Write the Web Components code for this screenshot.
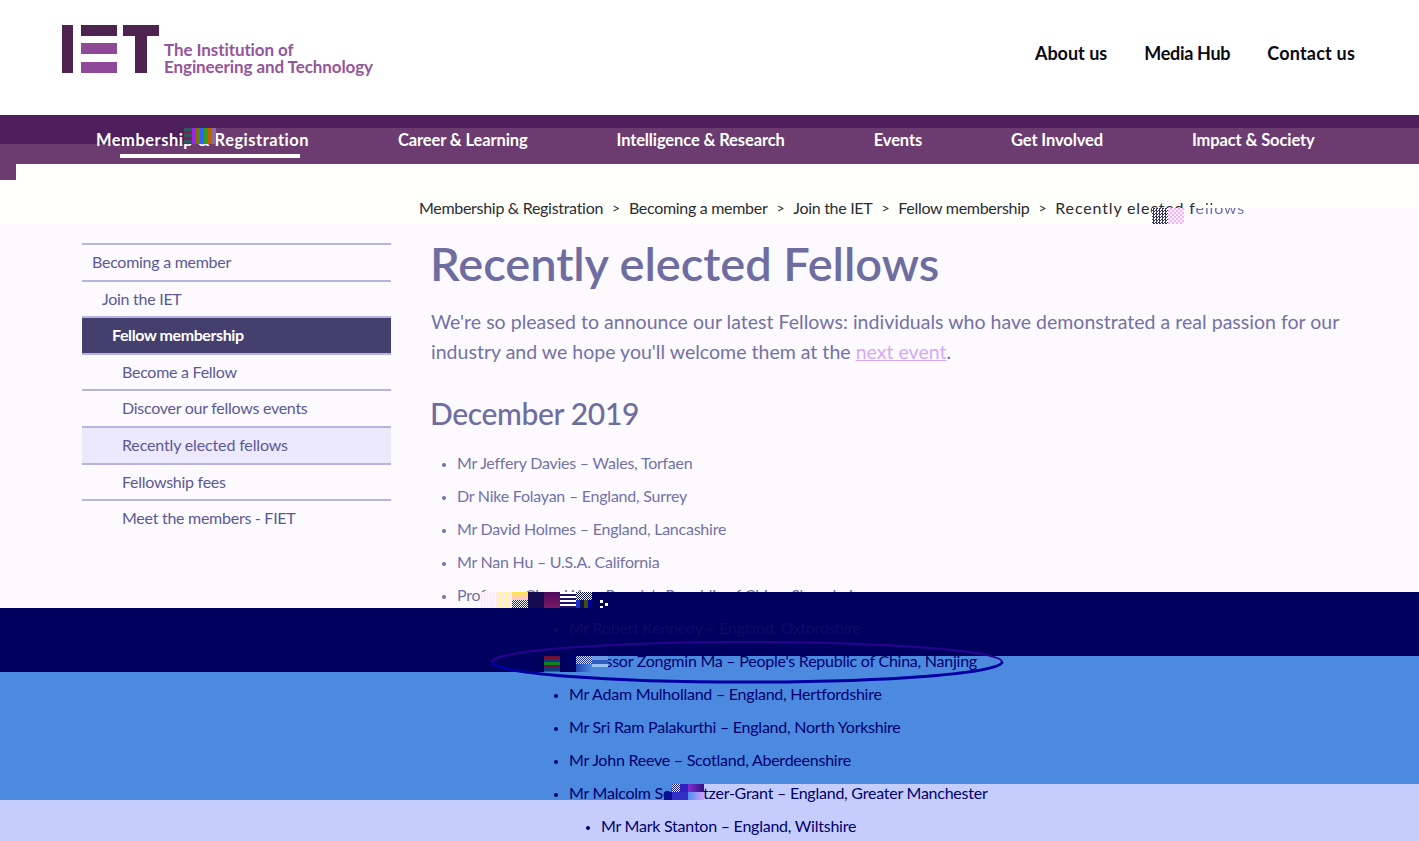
<!DOCTYPE html>
<html lang="en">
<head>
<meta charset="utf-8">
<title>Recently elected Fellows</title>
<style>
  html { height: 841px; overflow: hidden; background: #fffffc; }
  body { margin: 0; height: 841px; overflow: hidden; font-family: Lato, "Liberation Sans", sans-serif; position: relative; }
</style>
</head>
<body>
<iet-header></iet-header>
<iet-nav>
  <iet-nav-item active>Membership &amp; Registration</iet-nav-item>
  <iet-nav-item>Career &amp; Learning</iet-nav-item>
  <iet-nav-item>Intelligence &amp; Research</iet-nav-item>
  <iet-nav-item>Events</iet-nav-item>
  <iet-nav-item>Get Involved</iet-nav-item>
  <iet-nav-item>Impact &amp; Society</iet-nav-item>
</iet-nav>
<iet-breadcrumb></iet-breadcrumb>
<iet-main>
  <iet-sidebar slot="side">
    <iet-side-link level="0">Becoming a member</iet-side-link>
    <iet-side-link level="1">Join the IET</iet-side-link>
    <iet-side-link level="2" active>Fellow membership</iet-side-link>
    <iet-side-link level="3">Become a Fellow</iet-side-link>
    <iet-side-link level="3">Discover our fellows events</iet-side-link>
    <iet-side-link level="3" current>Recently elected fellows</iet-side-link>
    <iet-side-link level="3">Fellowship fees</iet-side-link>
    <iet-side-link level="3">Meet the members - FIET</iet-side-link>
  </iet-sidebar>
  <iet-article>
    <fellow-item>Mr Jeffery Davies – Wales, Torfaen</fellow-item>
    <fellow-item>Dr Nike Folayan – England, Surrey</fellow-item>
    <fellow-item>Mr David Holmes – England, Lancashire</fellow-item>
    <fellow-item>Mr Nan Hu – U.S.A. California</fellow-item>
    <fellow-item>Professor Chen Wu – People's Republic of China, Shanghai</fellow-item>
    <fellow-item tone="sunk" shift="1">Mr Robert Kennedy – England, Oxfordshire</fellow-item>
    <fellow-item tone="deep" shift="1">Professor Zongmin Ma – People's Republic of China, Nanjing</fellow-item>
    <fellow-item tone="deep" shift="1">Mr Adam Mulholland – England, Hertfordshire</fellow-item>
    <fellow-item tone="deep" shift="1">Mr Sri Ram Palakurthi – England, North Yorkshire</fellow-item>
    <fellow-item tone="deep" shift="1">Mr John Reeve – Scotland, Aberdeenshire</fellow-item>
    <fellow-item tone="deep" shift="1">Mr Malcolm Schweitzer-Grant – England, Greater Manchester</fellow-item>
    <fellow-item tone="deep" shift="2">Mr Mark Stanton – England, Wiltshire</fellow-item>
  </iet-article>
</iet-main>
<glitch-layer></glitch-layer>

<script>
// header with logo and the three top links
class IetHeader extends HTMLElement {
  constructor () {
    super()
    this.attachShadow({ mode: 'open' }).innerHTML = `
      <style>
        :host { display: flex; height: 115px; background: #fff; padding: 25px 64px 0 62px; box-sizing: border-box; justify-content: space-between; align-items: flex-start; }
        .logo { display: flex; align-items: flex-start; gap: 5px; }
        svg { display: block; }
        .name { color: #95559c; font-size: 17px; line-height: 17px; font-weight: 700; padding-top: 16px; letter-spacing: -.09px; white-space: nowrap; }
        nav { display: flex; gap: 37px; padding-top: 17px; }
        a { color: #0a0a14; font-size: 18px; font-weight: 700; line-height: 22px; text-decoration: none; white-space: nowrap; }
        a:nth-child(2) { letter-spacing: -.3px; }
        a:nth-child(3) { letter-spacing: .2px; }
      </style>
      <div class="logo">
        <svg width="97" height="48" viewBox="0 0 97 48">
          <rect x="0" y="0" width="11" height="48" fill="#4f2350"/>
          <rect x="19" y="0" width="36" height="11" fill="#4f2350"/>
          <rect x="19" y="18" width="36" height="11" fill="#8f4a97"/>
          <rect x="19" y="37" width="36" height="11" fill="#8f4a97"/>
          <rect x="61" y="0" width="36" height="11" fill="#4f2350"/>
          <rect x="73" y="0" width="12" height="48" fill="#4f2350"/>
        </svg>
        <div class="name">The Institution of<br>Engineering and Technology</div>
      </div>
      <nav><a href="#">About us</a><a href="#">Media Hub</a><a href="#">Contact us</a></nav>`
  }
}
customElements.define('iet-header', IetHeader)

class IetNav extends HTMLElement {
  constructor () {
    super()
    this.attachShadow({ mode: 'open' }).innerHTML = `
      <style>
        :host { display: flex; height: 49px; box-sizing: border-box; padding: 13px 0 0 96px; gap: 89px; background: linear-gradient(#4f1e5c 13px, #6c3c70 13px); position: relative; }
      </style>
      <slot></slot>`
  }
}
customElements.define('iet-nav', IetNav)

class IetNavItem extends HTMLElement {
  constructor () {
    super()
    this.attachShadow({ mode: 'open' }).innerHTML = `
      <style>
        :host { display: block; color: #fff; font-size: 16.5px; font-weight: 700; line-height: 24px; letter-spacing: -.12px; white-space: nowrap; position: relative; z-index: 2; }
        :host([active]) { letter-spacing: .48px; }
        :host([active])::after { content: ""; position: absolute; left: 24px; width: 180px; top: 26px; height: 4px; background: #fff; }
      </style>
      <slot></slot>`
  }
}
customElements.define('iet-nav-item', IetNavItem)

class IetBreadcrumb extends HTMLElement {
  constructor () {
    super()
    this.attachShadow({ mode: 'open' }).innerHTML = `
      <style>
        :host { display: flex; height: 79px; box-sizing: border-box; padding: 33px 0 0 419px; color: #2c2c33; font-size: 16px; line-height: 22px; letter-spacing: -.3px; white-space: nowrap; }
        i { font-style: normal; padding: 0 9px; font-size: 14px; }
        .last { letter-spacing: .85px; }
        /* the tile under this word is torn: ascender tops, a gap, then the paler lower part */
        .cut { color: transparent; background: linear-gradient(#2c2c33 0 7px, transparent 7px 10px, #6e6aa8 10px); -webkit-background-clip: text; background-clip: text; }
      </style>
      <span>Membership &amp; Registration</span><i>&gt;</i>
      <span>Becoming a member</span><i>&gt;</i>
      <span>Join the IET</span><i>&gt;</i>
      <span>Fellow membership</span><i>&gt;</i>
      <span class="last">Recently elected f<span class="cut">ellows</span></span>`
  }
}
customElements.define('iet-breadcrumb', IetBreadcrumb)

class IetMain extends HTMLElement {
  constructor () {
    super()
    this.attachShadow({ mode: 'open' }).innerHTML = `
      <style>
        :host { display: grid; grid-template-columns: 309px 1fr; column-gap: 40px; padding: 0 60px 0 82px; }
      </style>
      <slot name="side"></slot><slot></slot>`
  }
}
customElements.define('iet-main', IetMain)

class IetSidebar extends HTMLElement {
  constructor () {
    super()
    this.attachShadow({ mode: 'open' }).innerHTML = `
      <style>
        :host { display: block; border-top: 2px solid #b8b4e0; }
      </style>
      <slot></slot>`
  }
}
customElements.define('iet-sidebar', IetSidebar)

class IetSideLink extends HTMLElement {
  constructor () {
    super()
    this.attachShadow({ mode: 'open' }).innerHTML = `
      <style>
        :host { display: block; height: 36.6px; box-sizing: border-box; border-bottom: 2px solid #b8b4e0; color: #5c5896; font-size: 16px; line-height: 33px; letter-spacing: -.27px; white-space: nowrap; }
        :host(:last-child) { border-bottom: 0; }
        :host([level="0"]) { padding-left: 10px; }
        :host([level="1"]) { padding-left: 20px; }
        :host([level="2"]) { padding-left: 30px; }
        :host([level="3"]) { padding-left: 40px; }
        :host([active]) { background: #443f6c; color: #fff; font-weight: 700; letter-spacing: -.4px; }
        :host([current]) { background: #ece9fd; letter-spacing: -.15px; }
      </style>
      <slot></slot>`
  }
}
customElements.define('iet-side-link', IetSideLink)

class IetArticle extends HTMLElement {
  constructor () {
    super()
    this.attachShadow({ mode: 'open' }).innerHTML = `
      <style>
        :host { display: block; color: #7471a6; }
        h1 { margin: -8px 0 0 -1px; font-size: 47px; line-height: 56px; font-weight: 600; color: #6f6ca0; letter-spacing: -.05px; }
        p { margin: 16px 0 0; font-size: 19.5px; line-height: 30px; letter-spacing: .02px; }
        a { color: #d5a9f2; }
        h2 { margin: 28px 0 0 -1px; font-size: 30px; line-height: 36px; font-weight: 500; color: #6f6ca0; letter-spacing: -.35px; }
        ul { margin: 15px 0 0; padding: 0 0 0 26px; }
      </style>
      <h1>Recently elected Fellows</h1>
      <p>We're so pleased to announce our latest Fellows: individuals who have demonstrated a real passion for our industry and we hope you'll welcome them at the <a href="#">next event</a>.</p>
      <h2>December 2019</h2>
      <ul><slot></slot></ul>`
  }
}
customElements.define('iet-article', IetArticle)

class FellowItem extends HTMLElement {
  constructor () {
    super()
    this.attachShadow({ mode: 'open' }).innerHTML = `
      <style>
        :host { display: list-item; list-style: disc; height: 33px; font-size: 16px; line-height: 33px; letter-spacing: -.24px; white-space: nowrap; }
        :host::marker { font-size: 12px; }
        :host([shift="1"]) { margin-left: 112px; }
        :host([shift="2"]) { margin-left: 144px; }
        :host([tone]) { position: relative; z-index: 2; }
        :host([tone="sunk"]) { color: #0c0c66; }
        :host([tone="deep"]) { color: #00006e; }
      </style>
      <slot></slot>`
  }
}
customElements.define('fellow-item', FellowItem)

// damaged tiles of the capture; each entry is x, y, w, h, background
const BANDS = [
  [0, 224, 1419, 384, '#fcfaff'],
  [1184, 208, 235, 16, '#fcfaff']
]
const LOWER = [
  [0, 115, 192, 29, '#4f1e5c'],
  [0, 164, 16, 16, '#6c3c70'],
  [592, 592, 827, 16, '#00005f'],
  [0, 608, 1419, 48, '#00005f'],
  [0, 656, 608, 16, '#00005f'],
  [608, 656, 811, 128, '#4c8adf'],
  [0, 672, 608, 112, '#4c8adf'],
  [0, 784, 704, 16, '#4c8adf'],
  [704, 784, 715, 16, '#c5cdfd'],
  [0, 800, 1419, 41, '#c5cdfd']
]
const checks = (a, b, s) => `repeating-conic-gradient(${a} 0 25%, ${b} 0 50%) 0 0/${s}px ${s}px`
const NOISE = [
  [184, 128, 8, 16, 'repeating-linear-gradient(#2a5a5c 0 3px,#7c1f52 3px 6px)'],
  [192, 128, 24, 16, 'repeating-linear-gradient(90deg,#a020f0 0 4px,#7a7a00 4px 8px,#3060ff 8px 12px,#30a020 12px 16px,#c06000 16px 20px,#8a6ca0 20px 24px)'],
  [1152, 208, 16, 16, checks('#333366', '#fff', 3)],
  [1168, 208, 16, 16, checks('#ffb0f0', '#e8f4ff', 4)],
  [480, 592, 32, 16, checks('#ffe8f8', '#f8f8ff', 3)],
  [496, 592, 16, 16, checks('#fff6a0', '#ffe8ff', 3)],
  [512, 592, 16, 8, 'linear-gradient(#ffe840,#ffc0e8)'],
  [512, 600, 16, 8, checks('#20207a', '#fff', 2)],
  [528, 592, 16, 16, '#140a50'],
  [544, 592, 16, 16, 'linear-gradient(#500a60,#7a1a60)'],
  [560, 592, 16, 16, 'repeating-linear-gradient(#fff 0 2px,#201060 2px 4px)'],
  [576, 592, 16, 8, checks('#fff', '#101060', 2)],
  [576, 600, 16, 8, 'repeating-linear-gradient(90deg,#1a30d0 0 4px,#101050 4px 8px,#405010 8px 12px,#0000a0 12px 16px)'],
  [600, 600, 3, 3, '#fff'],
  [605, 603, 3, 3, '#fff'],
  [600, 606, 3, 2, '#fff'],
  [544, 656, 16, 16, 'repeating-linear-gradient(#6a1030 0 3px,#103a80 3px 6px,#108020 6px 9px)'],
  [576, 656, 16, 8, checks('#e0e8ff', '#2030a0', 2)],
  [576, 664, 16, 8, 'linear-gradient(90deg,#2040b0,#4c8adf)'],
  [592, 656, 16, 16, 'linear-gradient(#6c9ae8 0 4px,#3060c0 4px 8px,#9cc0f0 8px 11px,#4c8adf 11px)'],
  [664, 792, 8, 8, '#0a1090'],
  [672, 784, 8, 8, checks('#fff', '#1010a0', 2)],
  [672, 792, 16, 8, '#3030c8'],
  [680, 784, 8, 8, '#3020c0'],
  [688, 784, 16, 8, 'linear-gradient(90deg,#8030d0,#301080)'],
  [688, 792, 16, 8, 'linear-gradient(90deg,#5090f0,#d0a0f8)']
]
const place = (r, z) => `<b style="left:${r[0]}px;top:${r[1]}px;width:${r[2]}px;height:${r[3]}px;background:${r[4]};z-index:${z}"></b>`

class GlitchLayer extends HTMLElement {
  constructor () {
    super()
    this.attachShadow({ mode: 'open' }).innerHTML = `
      <style>
        :host { display: contents; }
        b { position: absolute; display: block; }
        svg { position: absolute; left: 0; top: 0; z-index: 3; }
      </style>
      ${BANDS.map(r => place(r, -1)).join('')}
      ${LOWER.map(r => place(r, 1)).join('')}
      <svg width="1419" height="841" viewBox="0 0 1419 841" fill="none">
        <path d="M492 662A255 20 0 0 1 1002 662" stroke="#2a0090" stroke-width="2"/>
        <path d="M492 662A255 20 0 0 0 1002 662" stroke="#0000a0" stroke-width="3"/>
      </svg>
      ${NOISE.map(r => place(r, 4)).join('')}`
  }
}
customElements.define('glitch-layer', GlitchLayer)
</script>
</body>
</html>
